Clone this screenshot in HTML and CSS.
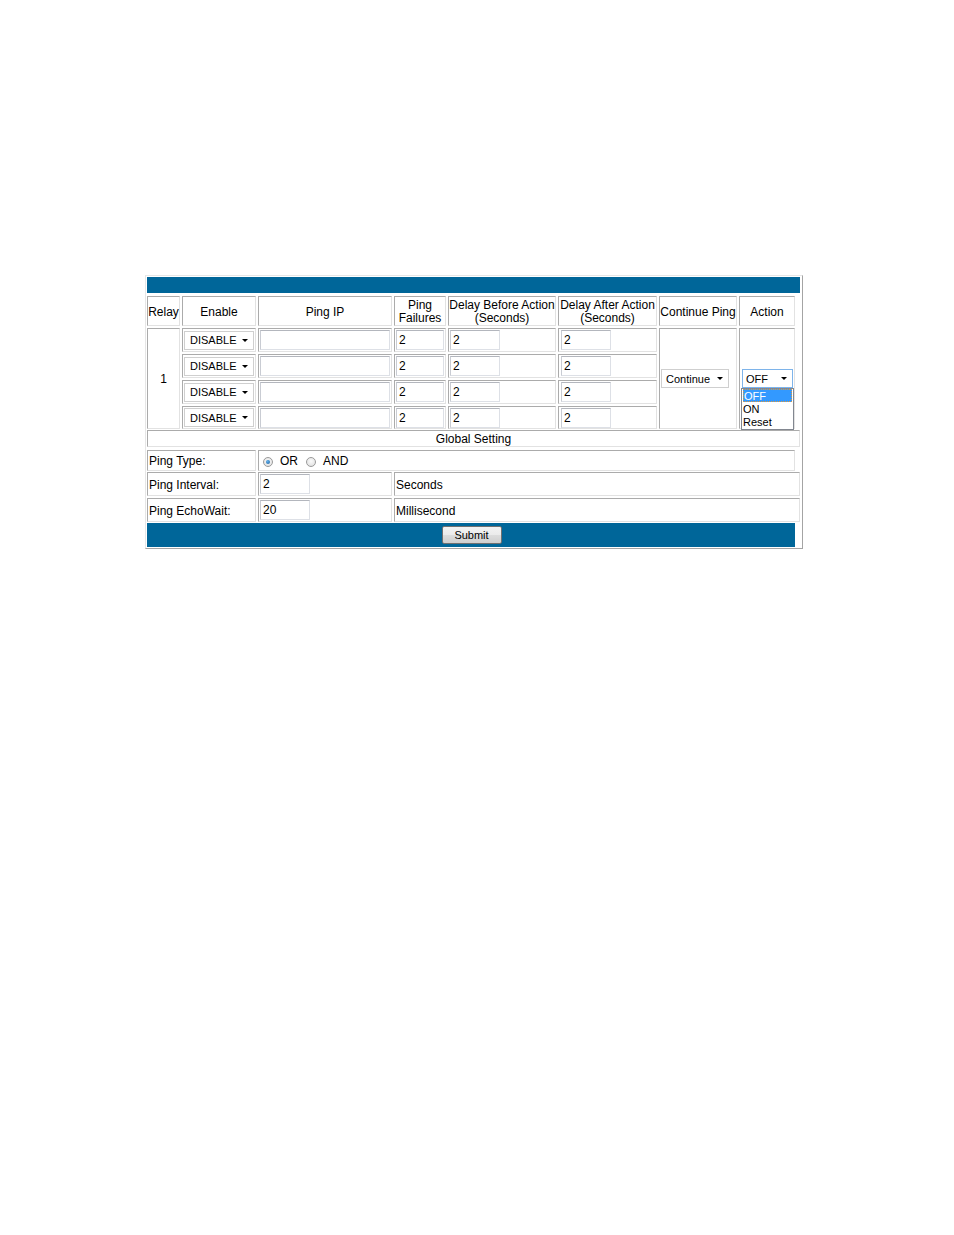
FILE: index.html
```html
<!DOCTYPE html>
<html>
<head>
<meta charset="utf-8">
<link rel="stylesheet" href="styles.css">
</head>
<body>
<div class="frame">
  <div class="bar top-bar"></div>

  <div class="relay">
    <div class="cell head">Relay</div>
    <div class="cell head">Enable</div>
    <div class="cell head">Ping IP</div>
    <div class="cell head">Ping<br>Failures</div>
    <div class="cell head">Delay Before Action<br>(Seconds)</div>
    <div class="cell head">Delay After Action<br>(Seconds)</div>
    <div class="cell head">Continue Ping</div>
    <div class="cell head">Action</div>

    <div class="cell relay-num">1</div>
    <div class="cell cont-cell"><span class="sel sel-cont">Continue</span></div>
    <div class="cell act-cell">
      <div class="act-wrap">
        <span class="sel sel-act">OFF</span>
        <ul class="droplist">
          <li class="picked">OFF</li>
          <li>ON</li>
          <li>Reset</li>
        </ul>
      </div>
    </div>

    <div class="cell"><span class="sel sel-en">DISABLE</span></div>
    <div class="cell"><span class="field f-ip"></span></div>
    <div class="cell"><span class="field f-num">2</span></div>
    <div class="cell"><span class="field f-num">2</span></div>
    <div class="cell"><span class="field f-num f-after">2</span></div>

    <div class="cell"><span class="sel sel-en">DISABLE</span></div>
    <div class="cell"><span class="field f-ip"></span></div>
    <div class="cell"><span class="field f-num">2</span></div>
    <div class="cell"><span class="field f-num">2</span></div>
    <div class="cell"><span class="field f-num f-after">2</span></div>

    <div class="cell"><span class="sel sel-en">DISABLE</span></div>
    <div class="cell"><span class="field f-ip"></span></div>
    <div class="cell"><span class="field f-num">2</span></div>
    <div class="cell"><span class="field f-num">2</span></div>
    <div class="cell"><span class="field f-num f-after">2</span></div>

    <div class="cell"><span class="sel sel-en">DISABLE</span></div>
    <div class="cell"><span class="field f-ip"></span></div>
    <div class="cell"><span class="field f-num">2</span></div>
    <div class="cell"><span class="field f-num">2</span></div>
    <div class="cell"><span class="field f-num f-after">2</span></div>
  </div>

  <div class="cell global text-cell">Global Setting</div>

  <div class="row-type">
    <div class="cell label text-cell">Ping Type:</div>
    <div class="cell radios text-cell">
      <span class="radio checked"></span><span class="rlabel">OR</span>
      <span class="radio"></span><span class="rlabel">AND</span>
    </div>
  </div>

  <div class="row-set">
    <div class="cell label text-cell">Ping Interval:</div>
    <div class="cell"><span class="field f-num">2</span></div>
    <div class="cell label text-cell">Seconds</div>
  </div>

  <div class="row-set">
    <div class="cell label text-cell">Ping EchoWait:</div>
    <div class="cell"><span class="field f-num">20</span></div>
    <div class="cell label text-cell">Millisecond</div>
  </div>

  <div class="bar bottom-bar"><button class="submit" type="button">Submit</button></div>
</div>
</body>
</html>
```

FILE: styles.css
```css
html, body {
  margin: 0;
  padding: 0;
  background: #ffffff;
}

body {
  font-family: "Liberation Sans", Arial, sans-serif;
  font-size: 12px;
  color: #000;
}

.frame {
  box-sizing: border-box;
  width: 658px;
  margin: 275px 0 0 145px;
  padding: 1px 0 1px 1px;
  border: 1px solid;
  border-color: #e6e6e6 #a4a4a4 #a4a4a4 #e6e6e6;
}

.bar {
  background: #006699;
}

.top-bar {
  width: 653px;
  height: 16px;
}

.cell {
  box-sizing: border-box;
  border: 1px solid;
  border-color: #ababab #e2e2e2 #e2e2e2 #ababab;
  display: flex;
  align-items: center;
  padding: 0 1px;
  font-size: 12px;
  line-height: 13px;
  white-space: nowrap;
}

.text-cell,
.head,
.relay-num {
  padding-top: 2px;
}

.relay {
  display: grid;
  margin-top: 3px;
  grid-template-columns: 33px 74px 134px 52px 108px 99px 78px 56px;
  grid-template-rows: 30px 24px 24px 24px 23px;
  column-gap: 2px;
  row-gap: 2px;
}

.head {
  justify-content: center;
  text-align: center;
}

.relay-num {
  grid-column: 1;
  grid-row: 2 / span 4;
  justify-content: center;
}

.cont-cell {
  grid-column: 7;
  grid-row: 2 / span 4;
}

.act-cell {
  grid-column: 8;
  grid-row: 2 / span 4;
  padding-left: 2px;
}

.act-wrap {
  position: relative;
}

.sel {
  box-sizing: border-box;
  position: relative;
  display: flex;
  align-items: center;
  height: 19px;
  border: 1px solid #cfcfcf;
  background: #fff;
  font-size: 11px;
  padding-left: 5px;
  padding-top: 1px;
}

.sel::after {
  content: "";
  position: absolute;
  right: 5px;
  top: 7px;
  border-left: 3px solid transparent;
  border-right: 3px solid transparent;
  border-top: 3px solid #000;
}

.sel-en {
  width: 71px;
}

.sel-cont {
  width: 68px;
  padding-left: 4px;
}

.sel-act {
  width: 51px;
  padding-left: 3px;
  border-color: #7eb4ea;
}

.droplist {
  position: absolute;
  left: -1px;
  top: 19px;
  box-sizing: border-box;
  width: 53px;
  height: 42px;
  margin: 0;
  padding: 0;
  list-style: none;
  border: 1px solid #828790;
  background: #fff;
  font-size: 11px;
  line-height: 14px;
}

.droplist li {
  padding-left: 1px;
  height: 13px;
}

.droplist li.picked {
  background: #3399ff;
  color: #fff;
  outline: 1px dotted #e09a3c;
  outline-offset: -1px;
  margin: 0 1px;
}

.field {
  box-sizing: border-box;
  display: flex;
  align-items: center;
  height: 20px;
  border: 1px solid #dde0e6;
  border-top-color: #b3b6bd;
  border-left-color: #c9ccd3;
  background: #fff;
  font-size: 12px;
  padding-left: 2px;
  padding-top: 1px;
}

.f-ip {
  width: 131px;
}

.f-num {
  width: 50px;
}

.f-after {
  margin-left: 1px;
}

.global {
  width: 653px;
  height: 17px;
  margin-top: 1px;
  justify-content: center;
}

.row-type {
  display: grid;
  grid-template-columns: 109px 537px;
  column-gap: 2px;
  height: 21px;
  margin-top: 3px;
}

.row-set {
  display: grid;
  grid-template-columns: 109px 134px 406px;
  column-gap: 2px;
  height: 24px;
  margin-top: 1px;
}

.row-set + .row-set {
  margin-top: 2px;
}

.label {
  padding-left: 1px;
}

.radios {
  padding-left: 4px;
}

.radio {
  box-sizing: border-box;
  display: inline-block;
  width: 10px;
  height: 10px;
  border-radius: 50%;
  border: 1px solid #9a9a9a;
  background: radial-gradient(circle at 50% 40%, #fafafa 0%, #dcdcdc 100%);
  position: relative;
}

.radio.checked::after {
  content: "";
  position: absolute;
  left: 2px;
  top: 2px;
  width: 4px;
  height: 4px;
  border-radius: 50%;
  background: radial-gradient(circle at 40% 35%, #5fb0ec 0%, #1c5f9e 100%);
}

.rlabel {
  margin-left: 7px;
  margin-right: 8px;
}

.bottom-bar {
  width: 648px;
  height: 24px;
  margin-top: 1px;
  display: flex;
  align-items: center;
  justify-content: center;
}

.submit {
  box-sizing: border-box;
  width: 60px;
  height: 18px;
  margin: 0 0 0 1px;
  padding: 0;
  border: 1px solid #707070;
  border-radius: 2px;
  background: linear-gradient(#f3f3f3 0%, #ebebeb 50%, #dddddd 51%, #cfcfcf 100%);
  font-family: "Liberation Sans", Arial, sans-serif;
  font-size: 11px;
  color: #000;
  line-height: 16px;
}
```
